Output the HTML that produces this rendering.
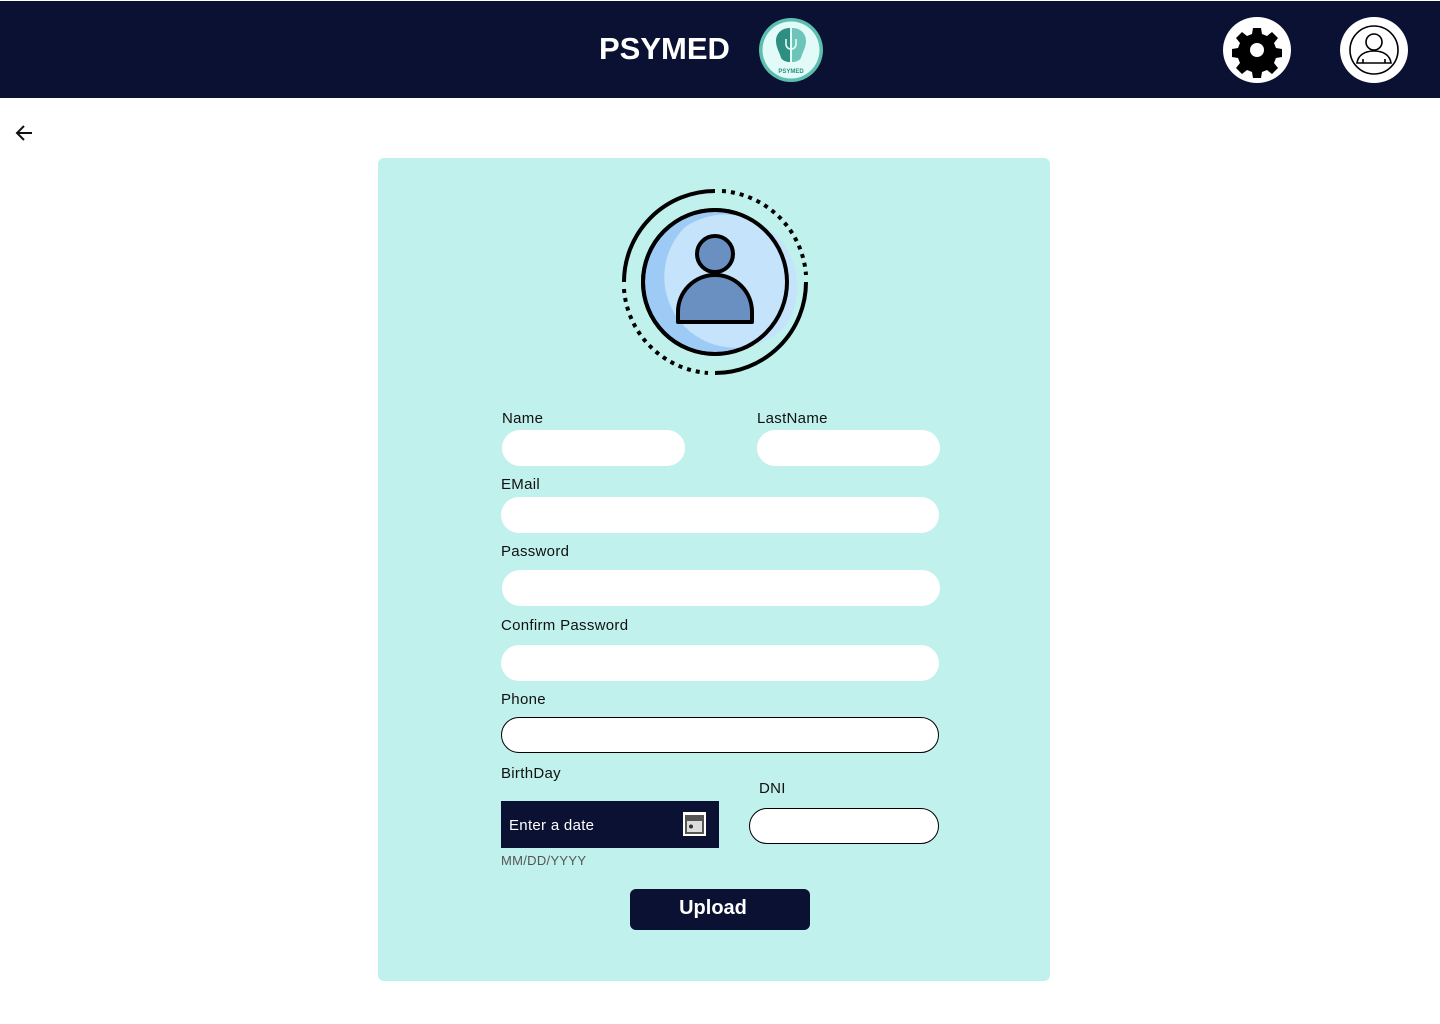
<!DOCTYPE html>
<html><head><meta charset="utf-8"><style>
*{margin:0;padding:0;box-sizing:border-box}
body{width:1440px;height:1024px;background:#fff;position:relative;font-family:"Liberation Sans",sans-serif;overflow:hidden}
.hdr{position:absolute;left:0;top:1px;width:1440px;height:97px;background:#0a1133}
.a{position:absolute}
.card{left:378px;top:158px;width:672px;height:823px;background:#c0f1ec;border-radius:6px}
.lbl{position:absolute;font-size:15px;color:#111;letter-spacing:0.3px;top:1px}
.in{position:absolute;height:36px;background:#fff;border-radius:18px}
.ob{border:1px solid #000}
</style></head><body>
<div class="hdr"></div>
<div class="a" style="left:599px;top:31px;color:#fff;font-weight:bold;font-size:31px">PSYMED</div>
<svg class="a" style="left:757px;top:16px" width="68" height="68" viewBox="0 0 68 68">
<circle cx="34" cy="34" r="32" fill="#5cbfae"/><circle cx="34" cy="34" r="28.5" fill="#e2fbf8"/>
<path d="M33 12c-8 0-14 5-14 13 0 7 4 12 5 17 3 4 7 4 9 4z" fill="#2e8f80"/>
<path d="M35 12c8 0 14 5 14 13 0 7-4 12-5 17-3 4-7 4-9 4z" fill="#6cc5b8"/>
<path d="M29 23v5c0 3 2 5 5 5s5-2 5-5v-5M34 20v27" stroke="#e2fbf8" stroke-width="1.6" fill="none"/>
<text x="34" y="57" font-size="6" font-weight="bold" text-anchor="middle" fill="#2e8f80" font-family="Liberation Sans">PSYMED</text>
</svg>
<svg class="a" style="left:1223px;top:17px" width="68" height="66" viewBox="0 0 68 66">
<ellipse cx="34" cy="33" rx="34" ry="33" fill="#fff"/>
<g transform="translate(34 33)" fill="#000">
<path d="M-4-22h8l1 6 5 2 5-4 6 6-4 5 2 5 6 1v8l-6 1-2 5 4 5-6 6-5-4-5 2-1 6h-8l-1-6-5-2-5 4-6-6 4-5-2-5-6-1v-8l6-1 2-5-4-5 6-6 5 4 5-2z"/>
<circle r="7" fill="#fff"/></g></svg>
<svg class="a" style="left:1340px;top:17px" width="68" height="66" viewBox="0 0 68 66">
<ellipse cx="34" cy="33" rx="34" ry="33" fill="#fff"/>
<circle cx="34" cy="33" r="24" fill="none" stroke="#000" stroke-width="1.6"/>
<circle cx="34" cy="25" r="8" fill="none" stroke="#000" stroke-width="1.6"/>
<path d="M17 46c1-8 8-12 17-12s16 4 17 12z" fill="none" stroke="#000" stroke-width="1.6"/>
<path d="M23 42v4M45 42v4" stroke="#000" stroke-width="1.6"/></svg>
<svg class="a" style="left:14px;top:124px" width="20" height="18" viewBox="0 0 20 18"><path d="M18 9H3M10 2L3 9l7 7" stroke="#111" stroke-width="2" fill="none"/></svg>
<div class="a card"></div>
<svg class="a" style="left:620px;top:187px" width="190" height="190" viewBox="0 0 190 190">
<path d="M95 4A91 91 0 0 0 4 95" stroke="#000" stroke-width="4" fill="none"/>
<path d="M186 95A91 91 0 0 1 95 186" stroke="#000" stroke-width="4" fill="none"/>
<path d="M102 4A91 91 0 0 1 186 88M4 102A91 91 0 0 0 88 186" stroke="#000" stroke-width="4" fill="none" stroke-dasharray="4 5"/>
<circle cx="95" cy="95" r="72" fill="#9ecbf5" stroke="#000" stroke-width="4"/>
<path d="M65 40A72 72 0 0 1 165 140 70 70 0 0 1 65 40z" fill="#c5e3fb"/>
<circle cx="95" cy="95" r="72" fill="none" stroke="#000" stroke-width="4"/>
<circle cx="95" cy="67" r="18" fill="#6a90c2" stroke="#000" stroke-width="4"/>
<path d="M58 135v-10a37 37 0 0 1 74 0v10z" fill="#6a90c2" stroke="#000" stroke-width="4" stroke-linejoin="round"/>
</svg>
<div class="lbl" style="left:502px;top:410px">Name</div>
<div class="lbl" style="left:757px;top:410px">LastName</div>
<div class="in" style="left:502px;top:430px;width:183px"></div>
<div class="in" style="left:757px;top:430px;width:183px"></div>
<div class="lbl" style="left:501px;top:476px">EMail</div>
<div class="in" style="left:501px;top:497px;width:438px"></div>
<div class="lbl" style="left:501px;top:543px">Password</div>
<div class="in" style="left:502px;top:570px;width:438px"></div>
<div class="lbl" style="left:501px;top:617px">Confirm Password</div>
<div class="in" style="left:501px;top:645px;width:438px"></div>
<div class="lbl" style="left:501px;top:691px">Phone</div>
<div class="in ob" style="left:501px;top:717px;width:438px"></div>
<div class="lbl" style="left:501px;top:765px">BirthDay</div>
<div class="lbl" style="left:759px;top:780px">DNI</div>
<div class="a" style="left:501px;top:801px;width:218px;height:47px;background:#0a1133"></div>
<div class="a" style="left:509px;top:817px;color:#fff;font-size:15px;letter-spacing:0.3px">Enter a date</div>
<svg class="a" style="left:682px;top:811px" width="25" height="26" viewBox="0 0 25 26"><rect x="1" y="1" width="23" height="24" fill="#fff"/><rect x="3" y="4" width="19" height="19" fill="#555"/><rect x="5" y="10" width="15" height="11" fill="#ddd"/><circle cx="9" cy="15.5" r="2" fill="#333"/></svg>
<div class="a" style="left:501px;top:853px;font-size:13px;color:#555;letter-spacing:0.3px">MM/DD/YYYY</div>
<div class="in ob" style="left:749px;top:808px;width:190px"></div>
<div class="a" style="left:630px;top:889px;width:180px;height:41px;background:#0a1133;border-radius:6px;color:#fff;font-weight:bold;font-size:20px;text-align:center;line-height:39px;padding-right:14px">Upload</div>
</body></html>
